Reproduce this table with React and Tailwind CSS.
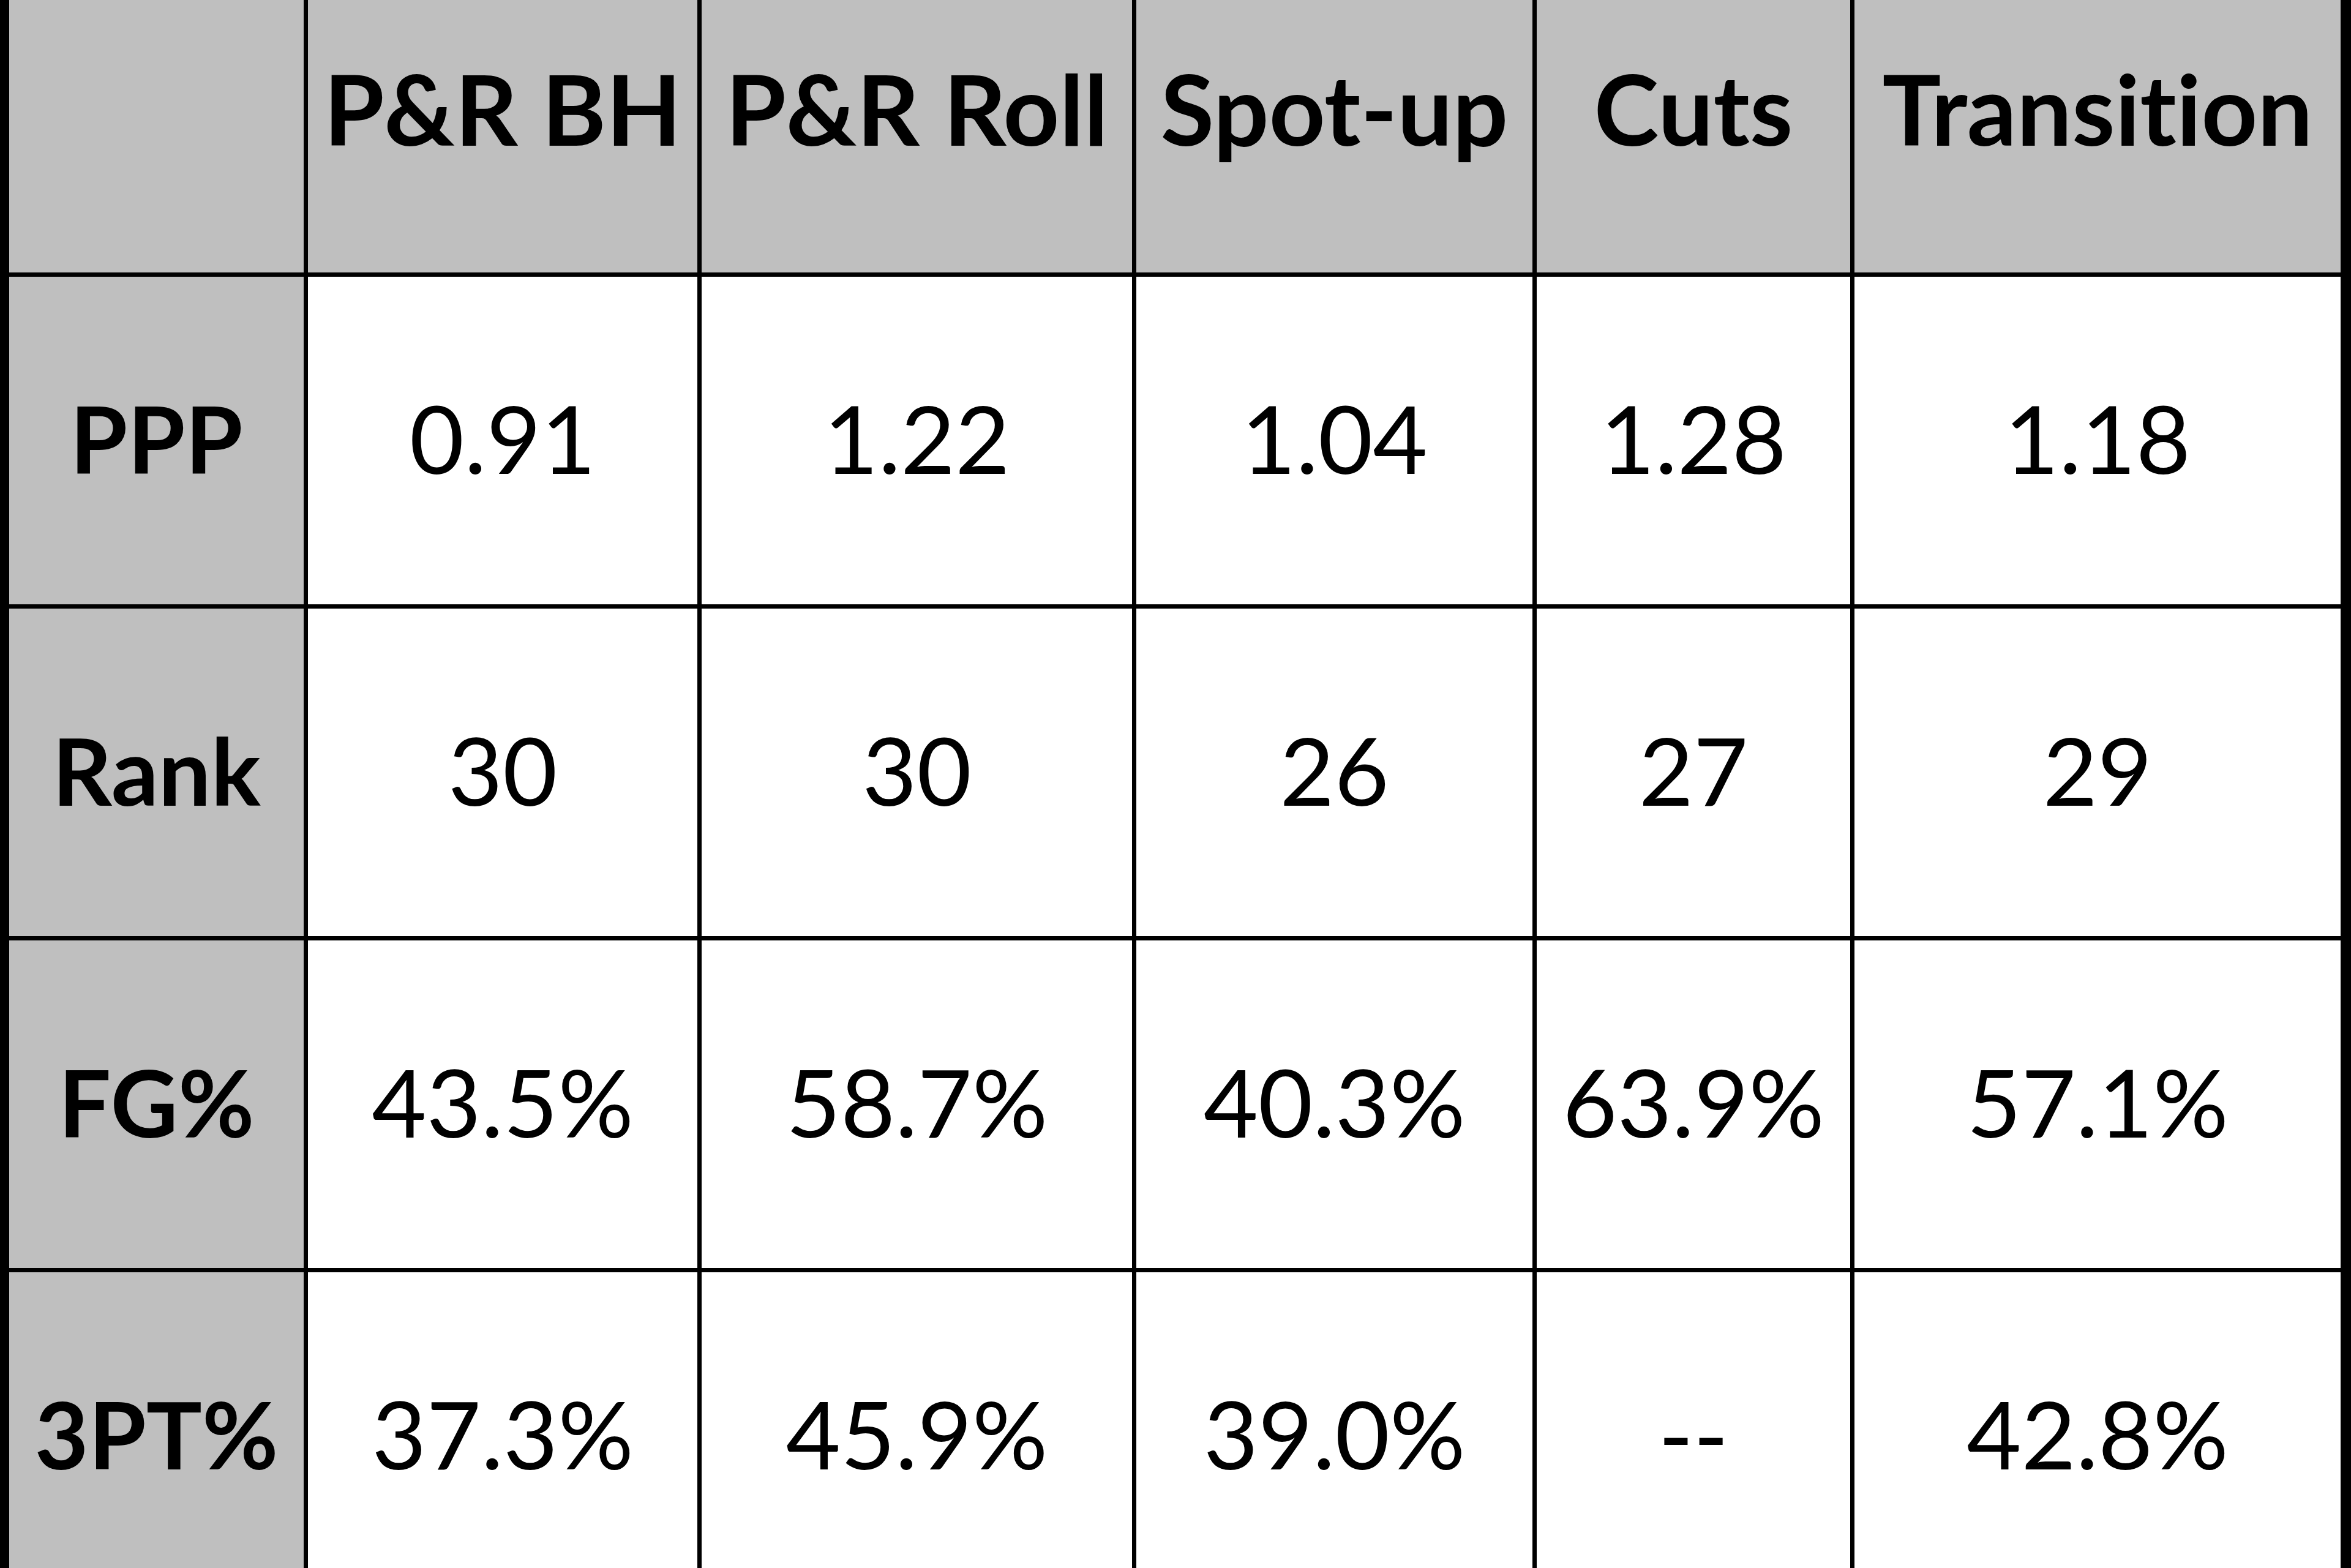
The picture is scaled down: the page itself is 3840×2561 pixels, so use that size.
import React from 'react';

// Tabla de jugadas (play types) estilo Excel
const headers = ['', 'P&R BH', 'P&R Roll', 'Spot-up', 'Cuts', 'Transition'];

const rows = [
  { label: 'PPP', values: ['0.91', '1.22', '1.04', '1.28', '1.18'] },
  { label: 'Rank', values: ['30', '30', '26', '27', '29'] },
  { label: 'FG%', values: ['43.5%', '58.7%', '40.3%', '63.9%', '57.1%'] },
  { label: '3PT%', values: ['37.3%', '45.9%', '39.0%', '--', '42.8%'] },
];

export default function App() {
  return (
    <div className="w-[3840px] h-[2561px] overflow-hidden bg-white font-[Lato,sans-serif] text-black [font-variant-ligatures:none]">
      <div className="-mt-[97px] grid grid-cols-[481px_636px_703px_647px_512px_794px] auto-rows-[535px] gap-[7px] bg-black pt-[7px] pb-[7px] pl-[15px] pr-[17px]">
        {headers.map((h, i) => (
          <div
            key={'h' + i}
            className="flex items-center justify-center bg-[#bfbfbf] text-[160px] font-bold whitespace-nowrap pb-[4px]"
          >
            {h}
          </div>
        ))}
        {rows.map((row) => (
          <React.Fragment key={row.label}>
            <div className="flex items-center justify-center bg-[#bfbfbf] text-[152px] font-bold whitespace-nowrap pb-[10px]">
              {row.label}
            </div>
            {row.values.map((v, j) => (
              <div
                key={row.label + j}
                className="flex items-center justify-center bg-white text-[154px] whitespace-nowrap pb-[10px]"
              >
                {v}
              </div>
            ))}
          </React.Fragment>
        ))}
      </div>
    </div>
  );
}
